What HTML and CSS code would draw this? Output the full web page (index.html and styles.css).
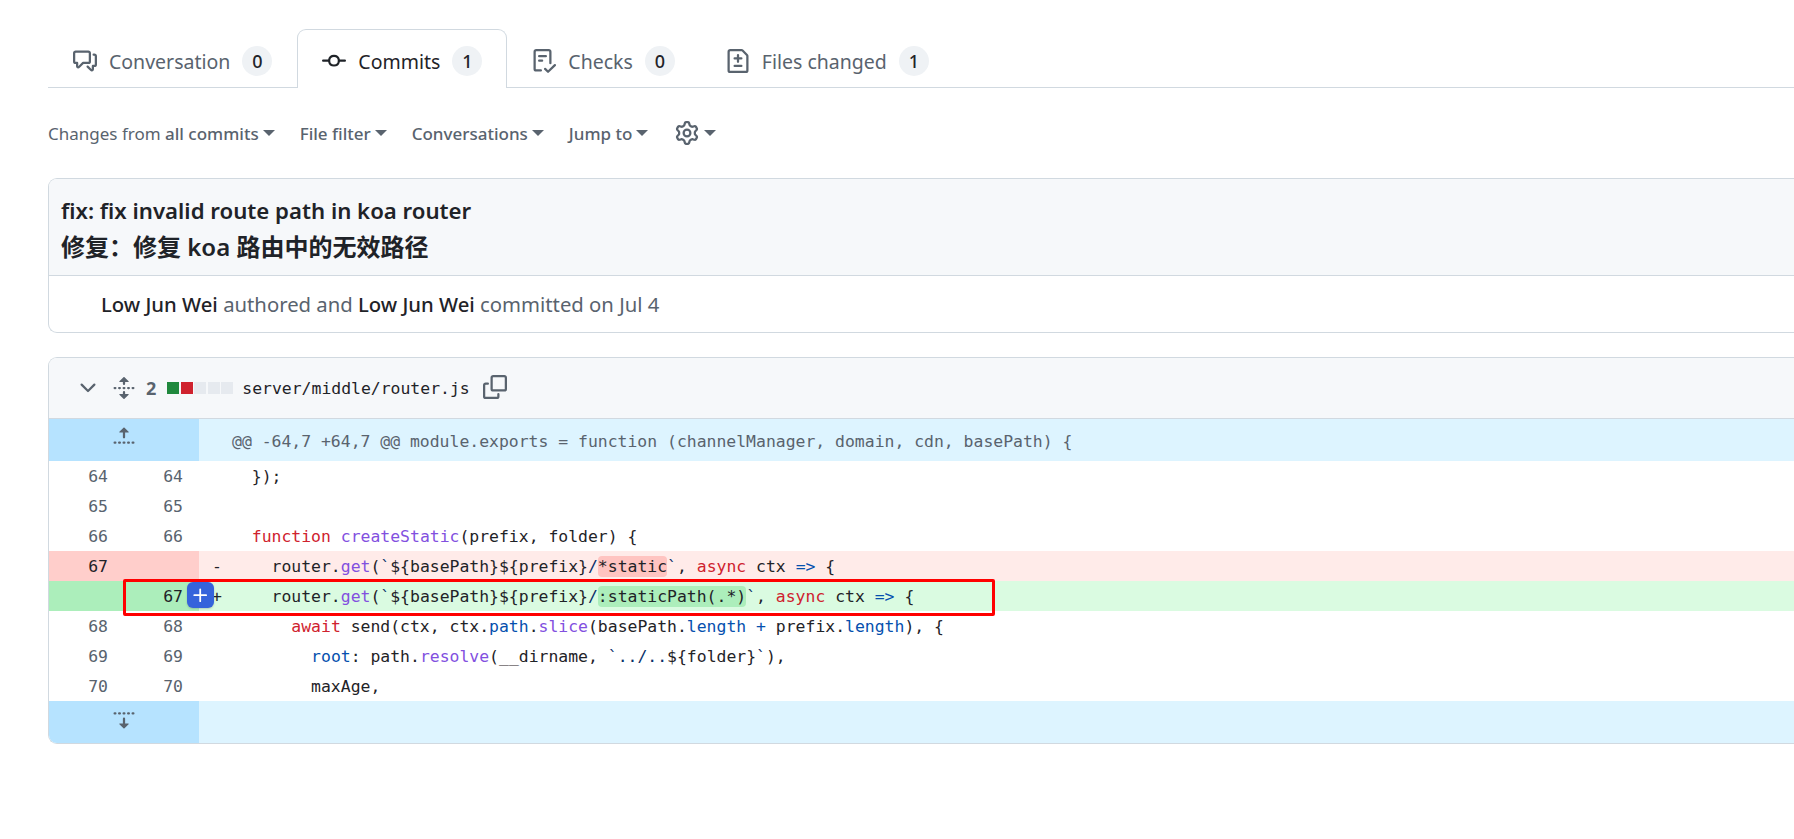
FILE: index.html
```html
<!DOCTYPE html>
<html lang="en">
  <head>
    <meta charset="UTF-8">
    <meta name="viewport" content="width=device-width, initial-scale=1">
    <title>fix: fix invalid route path in koa router</title>
    <link rel="stylesheet" href="styles.css">
  </head>
  <body>
    <div class="page">
      <nav class="tabs">
        <div class="tab">
          <svg class="icon" viewBox="0 0 16 16"><path d="M1.75 1h8.5c.966 0 1.75.784 1.75 1.75v5.5A1.75 1.75 0 0 1 10.25 10H7.061l-2.574 2.573A1.458 1.458 0 0 1 2 11.543V10h-.25A1.75 1.75 0 0 1 0 8.25v-5.5C0 1.784.784 1 1.75 1ZM1.5 2.75v5.5c0 .138.112.25.25.25h1a.75.75 0 0 1 .75.75v2.19l2.72-2.72a.749.749 0 0 1 .53-.22h3.5a.25.25 0 0 0 .25-.25v-5.5a.25.25 0 0 0-.25-.25h-8.5a.25.25 0 0 0-.25.25Zm13 2a.25.25 0 0 0-.25-.25h-.5a.75.75 0 0 1 0-1.5h.5c.966 0 1.75.784 1.75 1.75v5.5A1.75 1.75 0 0 1 14.25 12H14v1.543a1.458 1.458 0 0 1-2.487 1.03L9.22 12.28a.749.749 0 0 1 .326-1.275.749.749 0 0 1 .734.215l2.22 2.22v-2.19a.75.75 0 0 1 .75-.75h1a.25.25 0 0 0 .25-.25Z"/></svg>
          <span>Conversation</span>
          <span class="counter">0</span>
        </div>
        <div class="tab tab-active">
          <svg class="icon" viewBox="0 0 16 16"><path d="M11.93 8.5a4.002 4.002 0 0 1-7.86 0H.75a.75.75 0 0 1 0-1.5h3.32a4.002 4.002 0 0 1 7.86 0h3.32a.75.75 0 0 1 0 1.5Zm-1.43-.75a2.5 2.5 0 1 0-5 0 2.5 2.5 0 0 0 5 0Z"/></svg>
          <span>Commits</span>
          <span class="counter">1</span>
        </div>
        <div class="tab">
          <svg class="icon" viewBox="0 0 16 16"><path d="M2.5 1.75v11.5c0 .138.112.25.25.25h3.17a.75.75 0 0 1 0 1.5H2.75A1.75 1.75 0 0 1 1 13.25V1.75C1 .784 1.784 0 2.75 0h8.5C12.216 0 13 .784 13 1.75v7.736a.75.75 0 0 1-1.5 0V1.75a.25.25 0 0 0-.25-.25h-8.5a.25.25 0 0 0-.25.25Zm13.274 9.537v-.001l-4.557 4.45a.75.75 0 0 1-1.055-.008l-1.943-1.95a.75.75 0 0 1 1.062-1.058l1.419 1.425 4.026-3.932a.75.75 0 1 1 1.048 1.074ZM4.75 4h4.5a.75.75 0 0 1 0 1.5h-4.5a.75.75 0 0 1 0-1.5ZM4 7.75A.75.75 0 0 1 4.75 7h2a.75.75 0 0 1 0 1.5h-2A.75.75 0 0 1 4 7.75Z"/></svg>
          <span>Checks</span>
          <span class="counter">0</span>
        </div>
        <div class="tab tab-files">
          <svg class="icon" viewBox="0 0 16 16"><path d="M1 1.75C1 .784 1.784 0 2.75 0h7.586c.464 0 .909.184 1.237.513l2.914 2.914c.329.328.513.773.513 1.237v9.586A1.75 1.75 0 0 1 13.25 16H2.75A1.75 1.75 0 0 1 1 14.25Zm1.75-.25a.25.25 0 0 0-.25.25v12.5c0 .138.112.25.25.25h10.5a.25.25 0 0 0 .25-.25V4.664a.25.25 0 0 0-.073-.177l-2.914-2.914a.25.25 0 0 0-.177-.073ZM8 3.25a.75.75 0 0 1 .75.75v1.5h1.5a.75.75 0 0 1 0 1.5h-1.5v1.5a.75.75 0 0 1-1.5 0V7h-1.5a.75.75 0 0 1 0-1.5h1.5V4A.75.75 0 0 1 8 3.25Zm-3 8a.75.75 0 0 1 .75-.75h4.5a.75.75 0 0 1 0 1.5h-4.5a.75.75 0 0 1-.75-.75Z"/></svg>
          <span>Files changed</span>
          <span class="counter">1</span>
        </div>
      </nav>

      <div class="toolbar">
        <div class="menu"><span class="muted">Changes from</span>&nbsp;<b>all commits</b><i class="caret"></i></div>
        <div class="menu"><b>File filter</b><i class="caret"></i></div>
        <div class="menu"><b>Conversations</b><i class="caret"></i></div>
        <div class="menu"><b>Jump to</b><i class="caret"></i></div>
        <div class="menu menu-gear">
          <svg class="icon" viewBox="0 0 16 16"><path d="M8 0a8.2 8.2 0 0 1 .701.031C9.444.095 9.99.645 10.16 1.29l.288 1.107c.018.066.079.158.212.224.231.114.454.243.668.386.123.082.233.09.299.071l1.103-.303c.644-.176 1.392.021 1.82.63.27.385.506.792.704 1.218.315.675.111 1.422-.364 1.891l-.814.806c-.049.048-.098.147-.088.294.016.257.016.515 0 .772-.01.147.038.246.088.294l.814.806c.475.469.679 1.216.364 1.891a7.977 7.977 0 0 1-.704 1.217c-.428.61-1.176.807-1.82.63l-1.102-.302c-.067-.019-.177-.011-.3.071a5.909 5.909 0 0 1-.668.386c-.133.066-.194.158-.211.224l-.29 1.106c-.168.646-.715 1.196-1.458 1.26a8.006 8.006 0 0 1-1.402 0c-.743-.064-1.289-.614-1.458-1.26l-.289-1.106c-.018-.066-.079-.158-.212-.224a5.738 5.738 0 0 1-.668-.386c-.123-.082-.233-.09-.299-.071l-1.103.303c-.644.176-1.392-.021-1.82-.63a8.12 8.12 0 0 1-.704-1.218c-.315-.675-.111-1.422.363-1.891l.815-.806c.05-.048.098-.147.088-.294a6.214 6.214 0 0 1 0-.772c.01-.147-.038-.246-.088-.294l-.815-.806C.635 6.045.431 5.298.746 4.623a7.92 7.92 0 0 1 .704-1.217c.428-.61 1.176-.807 1.82-.63l1.102.302c.067.019.177.011.3-.071.214-.143.437-.272.668-.386.133-.066.194-.158.211-.224l.29-1.106C6.009.645 6.556.095 7.299.03 7.53.01 7.764 0 8 0Zm-.571 1.525c-.036.003-.108.036-.137.146l-.289 1.105c-.147.561-.549.967-.998 1.189-.173.086-.34.183-.5.29-.417.278-.97.423-1.529.27l-1.103-.303c-.109-.03-.175.016-.195.045-.22.312-.412.644-.573.99-.014.031-.021.11.059.19l.815.806c.411.406.562.957.53 1.456a4.709 4.709 0 0 0 0 .582c.032.499-.119 1.05-.53 1.456l-.815.806c-.081.08-.073.159-.059.19.162.346.353.677.573.989.02.03.085.076.195.046l1.102-.303c.56-.153 1.113-.008 1.53.27.161.107.328.204.501.29.447.222.85.629.997 1.189l.289 1.105c.029.109.101.143.137.146a6.6 6.6 0 0 0 1.142 0c.036-.003.108-.036.137-.146l.289-1.105c.147-.561.549-.967.998-1.189.173-.086.34-.183.5-.29.417-.278.97-.423 1.529-.27l1.103.303c.109.029.175-.016.195-.045.22-.313.411-.644.573-.99.014-.031.021-.11-.059-.19l-.815-.806c-.411-.406-.562-.957-.53-1.456a4.709 4.709 0 0 0 0-.582c-.032-.499.119-1.05.53-1.456l.815-.806c.081-.08.073-.159.059-.19a6.464 6.464 0 0 0-.573-.989c-.02-.03-.085-.076-.195-.046l-1.102.303c-.56.153-1.113.008-1.53-.27a4.44 4.44 0 0 0-.501-.29c-.447-.222-.85-.629-.997-1.189l-.289-1.105c-.029-.11-.101-.143-.137-.146a6.6 6.6 0 0 0-1.142 0ZM11 8a3 3 0 1 1-6 0 3 3 0 0 1 6 0ZM9.5 8a1.5 1.5 0 1 0-3.001.001A1.5 1.5 0 0 0 9.5 8Z"/></svg>
          <i class="caret"></i>
        </div>
      </div>

      <section class="box commit">
        <div class="commit-title">
          <div>fix: fix invalid route path in koa router</div>
          <div class="title-zh">修复：修复 koa 路由中的无效路径</div>
        </div>
        <div class="commit-meta">
          <b>Low Jun Wei</b>&nbsp;<span class="muted">authored and</span>&nbsp;<b>Low Jun Wei</b>&nbsp;<span class="muted">committed on Jul 4</span>
        </div>
      </section>

      <section class="box file">
        <header class="file-head">
          <svg class="icon chevron" viewBox="0 0 16 16"><path d="M12.78 5.22a.749.749 0 0 1 0 1.06l-4.25 4.25a.749.749 0 0 1-1.06 0L3.22 6.28a.749.749 0 1 1 1.06-1.06L8 8.939l3.72-3.719a.749.749 0 0 1 1.06 0Z"/></svg>
          <svg class="icon unfold" viewBox="0 0 16 16"><path d="m8.177.677 2.896 2.896a.25.25 0 0 1-.177.427H8.75v1.25a.75.75 0 0 1-1.5 0V4H5.104a.25.25 0 0 1-.177-.427L7.823.677a.25.25 0 0 1 .354 0ZM7.25 10.75a.75.75 0 0 1 1.5 0V12h2.146a.25.25 0 0 1 .177.427l-2.896 2.896a.25.25 0 0 1-.354 0l-2.896-2.896A.25.25 0 0 1 5.104 12H7.25v-1.25Zm-5-2a.75.75 0 0 0 0-1.5h-.5a.75.75 0 0 0 0 1.5h.5ZM6 8a.75.75 0 0 1-.75.75h-.5a.75.75 0 0 1 0-1.5h.5A.75.75 0 0 1 6 8Zm2.25.75a.75.75 0 0 0 0-1.5h-.5a.75.75 0 0 0 0 1.5h.5ZM12 8a.75.75 0 0 1-.75.75h-.5a.75.75 0 0 1 0-1.5h.5A.75.75 0 0 1 12 8Zm2.25.75a.75.75 0 0 0 0-1.5h-.5a.75.75 0 0 0 0 1.5h.5Z"/></svg>
          <span class="stat-num">2</span>
          <span class="diffstat"><i class="add"></i><i class="del"></i><i></i><i></i><i></i></span>
          <span class="file-name">server/middle/router.js</span>
          <svg class="icon copy" viewBox="0 0 16 16"><path d="M0 6.75C0 5.784.784 5 1.75 5h1.5a.75.75 0 0 1 0 1.5h-1.5a.25.25 0 0 0-.25.25v7.5c0 .138.112.25.25.25h7.5a.25.25 0 0 0 .25-.25v-1.5a.75.75 0 0 1 1.5 0v1.5A1.75 1.75 0 0 1 9.25 16h-7.5A1.75 1.75 0 0 1 0 14.25Z"/><path d="M5 1.75C5 .784 5.784 0 6.75 0h7.5C15.216 0 16 .784 16 1.75v7.5A1.75 1.75 0 0 1 14.25 11h-7.5A1.75 1.75 0 0 1 5 9.25Zm1.75-.25a.25.25 0 0 0-.25.25v7.5c0 .138.112.25.25.25h7.5a.25.25 0 0 0 .25-.25v-7.5a.25.25 0 0 0-.25-.25Z"/></svg>
        </header>

        <div class="row hunk hunk-top">
          <div class="expander"><svg class="icon" viewBox="0 0 16 16"><path d="M7.823 1.677 4.927 4.573A.25.25 0 0 0 5.104 5H7.25v3.236a.75.75 0 1 0 1.5 0V5h2.146a.25.25 0 0 0 .177-.427L8.177 1.677a.25.25 0 0 0-.354 0ZM13.75 11a.75.75 0 0 0 0 1.5h.5a.75.75 0 0 0 0-1.5h-.5Zm-3.75.75a.75.75 0 0 1 .75-.75h.5a.75.75 0 0 1 0 1.5h-.5a.75.75 0 0 1-.75-.75ZM7.75 11a.75.75 0 0 0 0 1.5h.5a.75.75 0 0 0 0-1.5h-.5ZM4 11.75a.75.75 0 0 1 .75-.75h.5a.75.75 0 0 1 0 1.5h-.5a.75.75 0 0 1-.75-.75ZM1.75 11a.75.75 0 0 0 0 1.5h.5a.75.75 0 0 0 0-1.5h-.5Z"/></svg></div>
          <div class="code">@@ -64,7 +64,7 @@ module.exports = function (channelManager, domain, cdn, basePath) {</div>
        </div>

        <div class="row">
          <div class="num">64</div><div class="num">64</div>
          <div class="code">  });</div>
        </div>
        <div class="row">
          <div class="num">65</div><div class="num">65</div>
          <div class="code"></div>
        </div>
        <div class="row">
          <div class="num">66</div><div class="num">66</div>
          <div class="code">  <span class="k">function</span> <span class="f">createStatic</span>(prefix, folder) {</div>
        </div>
        <div class="row row-del">
          <div class="num">67</div><div class="num"></div>
          <div class="code"><span class="marker">-</span>    router.<span class="f">get</span>(<span class="s">`</span>${basePath}${prefix}<span class="s">/</span><span class="word">*static</span><span class="s">`</span>, <span class="k">async</span> ctx <span class="c">=&gt;</span> {</div>
        </div>
        <div class="row row-add">
          <div class="num"></div><div class="num">67</div>
          <div class="code"><span class="marker">+</span>    router.<span class="f">get</span>(<span class="s">`</span>${basePath}${prefix}<span class="s">/</span><span class="word">:staticPath(.*)</span><span class="s">`</span>, <span class="k">async</span> ctx <span class="c">=&gt;</span> {</div>
          <div class="add-line">
            <svg class="icon" viewBox="0 0 16 16"><path d="M7.75 2a.75.75 0 0 1 .75.75V7h4.25a.75.75 0 0 1 0 1.5H8.5v4.25a.75.75 0 0 1-1.5 0V8.5H2.75a.75.75 0 0 1 0-1.5H7V2.75A.75.75 0 0 1 7.75 2Z"/></svg>
          </div>
          <div class="callout"></div>
        </div>
        <div class="row">
          <div class="num">68</div><div class="num">68</div>
          <div class="code">      <span class="k">await</span> send(ctx, ctx.<span class="c">path</span>.<span class="f">slice</span>(basePath.<span class="c">length</span> <span class="c">+</span> prefix.<span class="c">length</span>), {</div>
        </div>
        <div class="row">
          <div class="num">69</div><div class="num">69</div>
          <div class="code">        <span class="c">root</span>: path.<span class="f">resolve</span>(__dirname, <span class="s">`../..</span>${folder}<span class="s">`</span>),</div>
        </div>
        <div class="row">
          <div class="num">70</div><div class="num">70</div>
          <div class="code">        maxAge,</div>
        </div>

        <div class="row hunk hunk-end">
          <div class="expander"><svg class="icon" viewBox="0 0 16 16"><path d="m8.177 14.323 2.896-2.896a.25.25 0 0 0-.177-.427H8.75V7.764a.75.75 0 1 0-1.5 0V11H5.104a.25.25 0 0 0-.177.427l2.896 2.896a.25.25 0 0 0 .354 0ZM2.25 5a.75.75 0 0 0 0-1.5h-.5a.75.75 0 0 0 0 1.5h.5ZM6 4.25a.75.75 0 0 1-.75.75h-.5a.75.75 0 0 1 0-1.5h.5a.75.75 0 0 1 .75.75ZM8.25 5a.75.75 0 0 0 0-1.5h-.5a.75.75 0 0 0 0 1.5h.5ZM12 4.25a.75.75 0 0 1-.75.75h-.5a.75.75 0 0 1 0-1.5h.5a.75.75 0 0 1 .75.75Zm2.25.75a.75.75 0 0 0 0-1.5h-.5a.75.75 0 0 0 0 1.5h.5Z"/></svg></div>
          <div class="code"></div>
        </div>
      </section>
    </div>
  </body>
</html>
```

FILE: styles.css
```css
html, body {
  margin: 0;
  background-color: white;
  color: #1f2328;
  font-family: "Noto Sans", "Noto Sans CJK SC", sans-serif;
}

.page {
  padding: 29px 0 0 48px;
}

.icon {
  display: block;
  width: 24px;
  height: 24px;
  fill: currentColor;
  flex: none;
}

.muted {
  color: #59636e;
}

/* tabs */
.tabs {
  display: flex;
  height: 58px;
  border-bottom: 1px solid #d1d9e0;
}

.tab {
  display: flex;
  align-items: center;
  gap: 12px;
  height: 59px;
  box-sizing: border-box;
  padding: 5px 24px 0 25px;
  font-size: 19.5px;
  color: #59636e;
}

.tab .icon {
  color: #59636e;
}

.tab-active {
  background-color: white;
  color: #1f2328;
  border: 1px solid #d1d9e0;
  border-bottom: none;
  border-radius: 9px 9px 0 0;
  margin-left: 1px;
  padding-left: 24px;
  padding-top: 4px;
}

.tab-active .icon {
  color: #1f2328;
}

.tab-files {
  margin-left: 2px;
}

.counter {
  width: 30px;
  height: 30px;
  border-radius: 15px;
  background-color: #eff2f5;
  color: #1f2328;
  font-size: 18px;
  font-weight: 500;
  line-height: 30px;
  text-align: center;
}

/* toolbar */
.toolbar {
  display: flex;
  align-items: center;
  gap: 25px;
  height: 90px;
  font-size: 17px;
}

.menu {
  display: flex;
  align-items: center;
  color: #59636e;
}

.menu b {
  font-weight: 500;
}

.menu-gear {
  margin-left: 2px;
}

.caret {
  width: 0;
  height: 0;
  margin-left: 4px;
  border-style: solid;
  border-width: 6px 6px 0;
  border-color: #59636e transparent transparent;
}

.menu .icon + .caret {
  margin-left: 5px;
}

/* boxes, cut off by the right edge of the window */
.box {
  border: 1px solid #d1d9e0;
  border-right: none;
  border-radius: 9px 0 0 9px;
  overflow: hidden;
}

.commit {
  margin-bottom: 24px;
}

.commit-title {
  height: 97px;
  box-sizing: border-box;
  padding: 14px 12px 0;
  background-color: #f6f8fa;
  border-bottom: 1px solid #d1d9e0;
  font-size: 22.2px;
  font-weight: 600;
  line-height: 36px;
}

.title-zh {
  font-size: 24px;
}

.commit-meta {
  display: flex;
  align-items: center;
  height: 56px;
  padding-left: 52px;
  font-size: 20.3px;
}

.commit-meta b {
  font-weight: 500;
}

.file-head {
  display: flex;
  align-items: center;
  height: 60px;
  background-color: #f6f8fa;
  border-bottom: 1px solid #d1d9e0;
  color: #59636e;
  font-size: 18px;
}

.chevron {
  margin-left: 27px;
}

.unfold {
  margin-left: 12px;
}

.stat-num {
  margin-left: 10px;
  font-weight: 700;
}

.diffstat {
  display: flex;
  gap: 1.5px;
  margin-left: 11px;
}

.diffstat i {
  width: 12px;
  height: 12px;
  background-color: #e6eaef;
}

.diffstat .add {
  background-color: #1f883d;
}

.diffstat .del {
  background-color: #cf222e;
}

.file-name {
  margin-left: 9px;
  color: #1f2328;
  font-family: "DejaVu Sans Mono", monospace;
  font-size: 16.43px;
}

.copy {
  margin: -2px 0 0 13px;
}

/* diff rows */
.row {
  position: relative;
  display: flex;
  height: 30px;
  font-family: "DejaVu Sans Mono", monospace;
  font-size: 16.43px;
  line-height: 32px;
  white-space: pre;
}

.num {
  width: 75px;
  flex: none;
  box-sizing: border-box;
  padding-right: 16px;
  color: #59636e;
  text-align: right;
}

.code {
  position: relative;
  flex: 1;
  padding-left: 33px;
  color: #1f2328;
}

.marker {
  position: absolute;
  left: 13px;
}

.k {
  color: #cf222e;
}

.f {
  color: #8250df;
}

.s {
  color: #0a3069;
}

.c {
  color: #0550ae;
}

.row-del .num {
  background-color: #ffcecb;
  color: #1f2328;
}

.row-del .code {
  background-color: #ffebe9;
}

.row-del .word {
  background-color: #ffc4c1;
  border-radius: 4px;
  padding: 1px 0;
}

.row-add .num {
  background-color: #aceebb;
  color: #1f2328;
}

.row-add .code {
  background-color: #dafbe1;
}

.row-add .word {
  background-color: #aceebb;
  border-radius: 4px;
  padding: 1px 0;
}

.hunk {
  background-color: #ddf4ff;
}

.hunk-top {
  height: 42px;
  line-height: 46px;
}

.hunk-top .code {
  color: #59636e;
}

.hunk-end {
  height: 42px;
}

.expander {
  display: flex;
  justify-content: center;
  width: 150px;
  flex: none;
  padding-top: 6px;
  box-sizing: border-box;
  background-color: #b6e3ff;
  color: #59636e;
}

/* the blue + that shows on hover */
.add-line {
  position: absolute;
  left: 138px;
  top: 1px;
  display: flex;
  align-items: center;
  justify-content: center;
  width: 27px;
  height: 26px;
  border-radius: 6px;
  background-color: #3563db;
  box-shadow: 0 1px 2px rgba(31, 35, 40, 0.2);
  color: white;
}

.add-line .icon {
  width: 19px;
  height: 19px;
}

/* red box drawn on the screenshot */
.callout {
  position: absolute;
  left: 74px;
  top: -2px;
  width: 866px;
  height: 31px;
  border: 3px solid #f00;
  border-radius: 2px;
}
```
